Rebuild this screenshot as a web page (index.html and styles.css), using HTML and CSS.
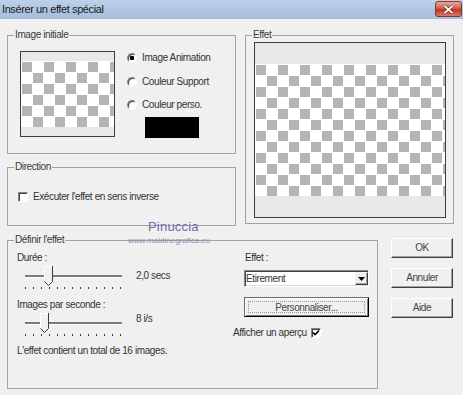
FILE: index.html
```html
<!DOCTYPE html>
<html lang="fr">
<head>
    <meta charset="UTF-8">
    <title>Insérer un effet spécial</title>
    <link rel="stylesheet" href="styles.css">
</head>
<body>
    <div class="window">
        <div class="titlebar">
            <span class="title">Insérer un effet spécial</span>
            <span class="close">
                <svg width="11" height="9" viewBox="0 0 11 9"><path d="M1.5 1L9.5 8M9.5 1L1.5 8" stroke="#5a1a12" stroke-width="3"/><path d="M1.5 1L9.5 8M9.5 1L1.5 8" stroke="#fff" stroke-width="1.8"/></svg>
            </span>
        </div>

        <div class="dialog">
            <div class="top">
                <div class="left-col">
                    <fieldset class="group group-image">
                        <legend>Image initiale</legend>
                        <div class="image-body">
                            <div class="preview preview-small"><div class="checker checker-small"></div></div>
                            <div class="radios">
                                <div class="radio"><span class="radio-btn on"></span>Image Animation</div>
                                <div class="radio"><span class="radio-btn"></span>Couleur Support</div>
                                <div class="radio"><span class="radio-btn"></span>Couleur perso.</div>
                                <div class="swatch"></div>
                            </div>
                        </div>
                    </fieldset>

                    <fieldset class="group group-direction">
                        <legend>Direction</legend>
                        <div class="direction-body">
                            <div class="check"><span class="cb"></span>Exécuter l'effet en sens inverse</div>
                        </div>
                    </fieldset>
                </div>

                <fieldset class="group group-effet">
                    <legend>Effet</legend>
                    <div class="effet-body">
                        <div class="preview preview-large"><div class="checker checker-large"></div></div>
                    </div>
                </fieldset>
            </div>

            <div class="bottom">
                <fieldset class="group group-define">
                    <legend>Définir l'effet</legend>
                    <div class="define-body">
                        <div class="sliders">
                            <div class="field-label">Durée :</div>
                            <div class="slider-row">
                                <svg class="slider" width="112" height="26" viewBox="0 0 112 26">
                                    <rect x="8" y="9" width="97" height="2" fill="#7a7a7a"/>
                                    <rect x="8" y="11" width="97" height="1" fill="#fff"/>
                                    <g fill="#3c3c3c">
                                        <rect x="8" y="21" width="1" height="2"/><rect x="16" y="21" width="1" height="2"/><rect x="24" y="21" width="1" height="2"/><rect x="32" y="21" width="1" height="2"/><rect x="40" y="21" width="1" height="2"/><rect x="47" y="21" width="1" height="2"/><rect x="55" y="21" width="1" height="2"/><rect x="63" y="21" width="1" height="2"/><rect x="71" y="21" width="1" height="2"/><rect x="79" y="21" width="1" height="2"/><rect x="87" y="21" width="1" height="2"/><rect x="95" y="21" width="1" height="2"/><rect x="103" y="21" width="1" height="2"/>
                                    </g>
                                    <polygon points="27,0 35,0 35,15 31,19 27,15" fill="#f0f0f0"/>
                                    <path d="M27.5 15V0.5H35" stroke="#fff" fill="none"/>
                                    <path d="M35.5 0V15.5L31.5 19.5L27.5 15.5" stroke="#3c3c3c" fill="none"/>
                                </svg>
                                <span class="slider-value value-duration">2,0 secs</span>
                            </div>

                            <div class="field-label label-fps">Images par seconde :</div>
                            <div class="slider-row">
                                <svg class="slider" width="112" height="26" viewBox="0 0 112 26">
                                    <rect x="8" y="9" width="97" height="2" fill="#7a7a7a"/>
                                    <rect x="8" y="11" width="97" height="1" fill="#fff"/>
                                    <g fill="#3c3c3c">
                                        <rect x="8" y="21" width="1" height="2"/><rect x="16" y="21" width="1" height="2"/><rect x="24" y="21" width="1" height="2"/><rect x="32" y="21" width="1" height="2"/><rect x="40" y="21" width="1" height="2"/><rect x="47" y="21" width="1" height="2"/><rect x="55" y="21" width="1" height="2"/><rect x="63" y="21" width="1" height="2"/><rect x="71" y="21" width="1" height="2"/><rect x="79" y="21" width="1" height="2"/><rect x="87" y="21" width="1" height="2"/><rect x="95" y="21" width="1" height="2"/><rect x="103" y="21" width="1" height="2"/>
                                    </g>
                                    <polygon points="23,0 31,0 31,15 27,19 23,15" fill="#f0f0f0"/>
                                    <path d="M23.5 15V0.5H31" stroke="#fff" fill="none"/>
                                    <path d="M31.5 0V15.5L27.5 19.5L23.5 15.5" stroke="#3c3c3c" fill="none"/>
                                </svg>
                                <span class="slider-value value-fps">8 i/s</span>
                            </div>

                            <div class="summary">L'effet contient un total de 16 images.</div>
                        </div>

                        <div class="effect-opts">
                            <div class="opt-label">Effet :</div>
                            <div class="select">
                                <span>Etirement</span>
                                <span class="select-arrow">
                                    <svg width="7" height="4" viewBox="0 0 7 4"><polygon points="0,0 7,0 3.5,4" fill="#000"/></svg>
                                </span>
                            </div>
                            <div class="custom-btn"><span>Personnaliser...</span></div>
                            <div class="check preview-check">Afficher un aperçu<span class="cb checked">
                                <svg width="8" height="8" viewBox="0 0 8 8"><path d="M1 3.5L3 5.5L7 1.5" stroke="#000" stroke-width="1.6" fill="none"/></svg>
                            </span></div>
                        </div>
                    </div>
                </fieldset>

                <div class="buttons">
                    <div class="btn">OK</div>
                    <div class="btn">Annuler</div>
                    <div class="btn">Aide</div>
                </div>
            </div>
        </div>

        <div class="watermark">
            <span class="wm-name">Pinuccia</span>
            <span class="wm-url">www.maldinegrafica.eu</span>
        </div>
    </div>
</body>
</html>
```

FILE: styles.css
```css
* {
    box-sizing: border-box;
}
body {
    margin: 0;
    background: #f0f0f0;
    font-family: "Liberation Sans", Arial, sans-serif;
    font-size: 10px;
    letter-spacing: -0.4px;
    color: #333;
}
.window {
    position: relative;
    width: 463px;
    height: 395px;
    overflow: hidden;
}

/* title bar */
.titlebar {
    height: 19px;
    display: flex;
    justify-content: space-between;
    padding: 0 1px 0 2px;
    background: linear-gradient(#bdd1e9, #a3bddc);
}
.title {
    font-size: 11px;
    line-height: 19px;
    color: #1a1a1a;
}
.close {
    width: 27px;
    height: 16px;
    margin-top: 1px;
    display: flex;
    align-items: center;
    justify-content: center;
    border: 1px solid #8a3326;
    border-radius: 3px;
    background: linear-gradient(#e9a89b, #d0604f 45%, #b93823 55%, #d47a6b);
}

/* layout */
.dialog {
    padding: 10px 0 0 7px;
}
.top {
    display: flex;
    gap: 9px;
}
.left-col {
    width: 229px;
    display: flex;
    flex-direction: column;
    gap: 7px;
}
.bottom {
    display: flex;
    gap: 13px;
    margin-top: 8px;
}

/* group boxes */
.group {
    margin: 0;
    padding: 0;
    min-width: 0;
    border: 1px solid #a3a3a3;
}
.group legend {
    margin-left: 6px;
    padding: 0 1px;
    font-size: 10px;
    line-height: 12px;
    color: #3a3a3a;
}
.group-image {
    height: 125px;
}
.group-direction {
    height: 65px;
}
.group-effet {
    width: 209px;
    height: 195px;
}
.group-define {
    width: 371px;
    height: 155px;
}

/* previews */
.image-body {
    display: flex;
    padding: 10px 0 0 12px;
}
.effet-body {
    padding: 1px 0 0 8px;
}
.preview {
    display: flex;
    align-items: center;
    border: 1px solid #3e3e3e;
    background: #e9e9e9;
}
.preview-small {
    width: 95px;
    height: 86px;
}
.preview-large {
    width: 192px;
    height: 176px;
}
.checker {
    width: 100%;
    background:
        linear-gradient(90deg, #fff 1px, transparent 1px) 0 0 / 11px 11px,
        linear-gradient(#fff 1px, transparent 1px) 0 0 / 11px 11px,
        conic-gradient(#fff 0 25%, #b5b5b5 0 50%, #fff 0 75%, #b5b5b5 0) 0 0 / 22px 22px;
}
.checker-small {
    height: 66px;
}
.checker-large {
    height: 132px;
}

/* radios and checkboxes */
.radios {
    margin: 1px 0 0 12px;
    display: flex;
    flex-direction: column;
}
.radio {
    height: 12px;
    line-height: 12px;
    display: flex;
    align-items: center;
    gap: 5px;
}
.radio + .radio {
    margin-top: 11.5px;
}
.radio-btn {
    width: 10px;
    height: 10px;
    border-radius: 50%;
    border: 1px solid;
    border-color: #858585 #fff #fff #858585;
    background: #fff;
    box-shadow: inset 1px 1px #404040;
}
.radio-btn.on {
    background: radial-gradient(circle, #000 0 2px, #fff 2.5px);
}
.swatch {
    width: 54px;
    height: 21px;
    margin: 6px 0 0 18px;
    background: #000;
}
.direction-body {
    padding: 18px 0 0 10px;
}
.check {
    display: flex;
    align-items: center;
    gap: 5px;
    height: 12px;
    line-height: 12px;
}
.cb {
    width: 10px;
    height: 10px;
    display: flex;
    align-items: center;
    justify-content: center;
    border: 1px solid;
    border-color: #858585 #fff #fff #858585;
    background: #fff;
    box-shadow: inset 1px 1px #404040;
}

/* define effect */
.define-body {
    display: flex;
    padding: 6px 0 0 9px;
}
.sliders {
    width: 216px;
}
.field-label {
    line-height: 12px;
}
.label-fps {
    margin-top: 7px;
}
.slider-row {
    display: flex;
    align-items: flex-start;
    margin-top: 2px;
}
.slider {
    display: block;
}
.slider-value {
    margin-left: 7px;
    line-height: 12px;
}
.value-duration {
    padding-top: 4px;
}
.value-fps {
    padding-top: 0;
}
.summary {
    margin-top: 6px;
    line-height: 12px;
}

.effect-opts {
    width: 136px;
    display: flex;
    flex-direction: column;
}
.opt-label {
    margin-left: 12px;
    line-height: 12px;
}
.select {
    width: 125px;
    height: 17px;
    margin: 6px 0 0 11px;
    display: flex;
    align-items: center;
    justify-content: space-between;
    padding: 0 0 0 1px;
    border: 1px solid;
    border-color: #858585 #fff #fff #858585;
    background: #fff;
    box-shadow: inset 1px 1px #404040, inset -1px -1px #dcdcdc;
    line-height: 13px;
}
.select-arrow {
    width: 13px;
    height: 13px;
    display: flex;
    align-items: center;
    justify-content: center;
    border: 1px solid;
    border-color: #f4f4f4 #404040 #404040 #f4f4f4;
    background: #f0f0f0;
    box-shadow: inset -1px -1px #a0a0a0;
}
.custom-btn {
    width: 125px;
    height: 20px;
    margin: 10px 0 0 11px;
    padding: 3px;
    border: 1px solid;
    border-color: #6a6a6a #000 #000 #6a6a6a;
    box-shadow: inset 1px 1px #fff, inset -1px -1px #808080;
    background: #f0f0f0;
}
.custom-btn span {
    display: block;
    height: 12px;
    line-height: 11px;
    text-align: center;
    color: #444;
    border: 1px dotted #999;
}
.preview-check {
    margin-top: 10px;
    gap: 4px;
}

/* dialog buttons */
.buttons {
    width: 62px;
    margin-top: 4px;
    display: flex;
    flex-direction: column;
    gap: 10px;
}
.btn {
    height: 20px;
    line-height: 18px;
    text-align: center;
    color: #444;
    border: 1px solid;
    border-color: #fff #404040 #404040 #fff;
    box-shadow: inset -1px -1px #a0a0a0;
    background: #f0f0f0;
}

/* watermark over the dialog */
.watermark {
    position: absolute;
    left: 128px;
    top: 219px;
    display: flex;
    flex-direction: column;
    letter-spacing: 0;
}
.wm-name {
    margin-left: 20px;
    font-size: 13px;
    line-height: 15px;
    letter-spacing: 0.2px;
    color: #6d6dae;
}
.wm-url {
    margin-top: 2px;
    font-size: 8px;
    line-height: 9px;
    color: #8a8aa8;
}
```
